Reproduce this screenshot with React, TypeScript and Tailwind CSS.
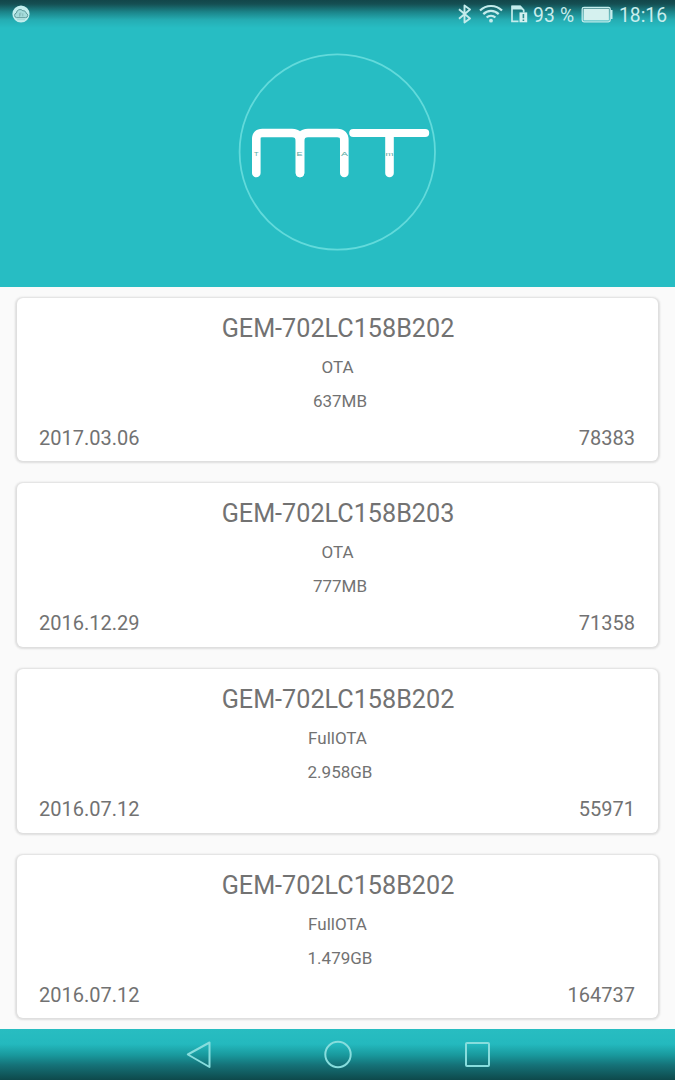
type Firmware = { name: string; kind: string; size: string; date: string; build: string };

const firmwares: Firmware[] = [
  { name: "GEM-702LC158B202", kind: "OTA", size: "637MB", date: "2017.03.06", build: "78383" },
  { name: "GEM-702LC158B203", kind: "OTA", size: "777MB", date: "2016.12.29", build: "71358" },
  { name: "GEM-702LC158B202", kind: "FullOTA", size: "2.958GB", date: "2016.07.12", build: "55971" },
  { name: "GEM-702LC158B202", kind: "FullOTA", size: "1.479GB", date: "2016.07.12", build: "164737" },
];

function CloudIcon() {
  return (
    <svg className="ml-3 h-[18px] w-[18px]" viewBox="0 0 18 18">
      <circle cx="9" cy="9" r="8.6" fill="#c3eeee" />
      <path d="M4.6 12.7h9a2.3 2.3 0 0 0 .5-4.5 2.6 2.6 0 0 0-3.2-2.4A3.7 3.7 0 0 0 4.4 8a2.4 2.4 0 0 0 .2 4.7Z" fill="#a5dcdc" stroke="#5f999b" strokeWidth="1" />
      <path d="M7.6 11.6V8.2h1.8M7.6 9.9h1.6M10.8 8.3v3" fill="none" stroke="#83b5b5" strokeWidth=".9" />
      <path d="M5 14.7h8" stroke="#95cece" strokeWidth=".7" />
    </svg>
  );
}

function StatusIcons() {
  return (
    <svg className="h-7 w-[72px]" viewBox="456 0 72 28" fill="none">
      <path d="M459 9.3l11 9.2-5.5 4V5.5l5.5 4L459 18.7" stroke="#c4ecec" strokeWidth="1.9" strokeLinejoin="round" />
      <g stroke="#c4ecec" strokeWidth="2.2">
        <path d="M480 10.6a15.5 15.5 0 0 1 22 0" />
        <path d="M483.3 14.1a10.9 10.9 0 0 1 15.4 0" />
        <path d="M486.6 17.6a6.2 6.2 0 0 1 8.8 0" />
      </g>
      <circle cx="491" cy="20.7" r="1.9" fill="#c4ecec" />
      <path d="M518.5 21.4H512V6.4h8.2l3.5 3.7v2.5" stroke="#c4ecec" strokeWidth="1.7" />
      <path d="M512 5.8h8.5l3.3 3.7H512Z" fill="#c4ecec" />
      <path d="M519.5 12.4h7.7v9.9h-7.7Z" fill="#d5f1f0" />
      <path d="M523.4 14v4.3M523.4 19.4v1.5" stroke="#2c8e92" strokeWidth="1.6" />
    </svg>
  );
}

function Battery() {
  return (
    <svg className="h-7 w-8" viewBox="581 0 32 28">
      <rect x="582.2" y="7.3" width="28" height="14.5" rx="1.8" fill="none" stroke="#c4ecec" strokeWidth="1.3" />
      <rect x="583.5" y="8.6" width="25.4" height="11.9" fill="#d5f1ef" />
      <path d="M611.6 10v9" stroke="#c4ecec" strokeWidth="1.8" />
    </svg>
  );
}

function Logo() {
  return (
    <svg className="h-[200px] w-[200px]" viewBox="237 52 200 200" fill="none">
      <circle cx="337.3" cy="152" r="97.7" stroke="#62dadb" strokeWidth="1.8" />
      <g stroke="#fff" strokeLinecap="round" strokeLinejoin="round">
        <path d="M256.3 173V139q0-6 6-6H292q8 0 8 9V173" strokeWidth="8.6" />
        <path d="M300 173V142q0-9 8-9h29.300q7 0 7 7V173" strokeWidth="8.6" />
        <path d="M353.2 133h72" strokeWidth="8" />
        <path d="M389.5 135v38" strokeWidth="8.6" />
      </g>
      <g fill="#58aaa4" fontFamily="Liberation Sans, sans-serif" fontSize="5.6">
        <text x="254" y="156" textLength="4.5" lengthAdjust="spacingAndGlyphs">T</text>
        <text x="296.6" y="156" textLength="6" lengthAdjust="spacingAndGlyphs">E</text>
        <text x="341" y="156" textLength="7" lengthAdjust="spacingAndGlyphs">A</text>
        <text x="385.5" y="156" textLength="8" lengthAdjust="spacingAndGlyphs">m</text>
      </g>
    </svg>
  );
}

function Card({ item }: { item: Firmware }) {
  return (
    <article className="flex h-[163.7px] shrink-0 flex-col rounded-[6px] bg-white px-[23px] pt-[11px] text-center text-[#727272] shadow-[0_0.5px_2px_1.5px_#dedede]">
      <h2 className="h-10 pl-px text-[25.2px] leading-10">{item.name}</h2>
      <p className="mt-px h-[34px] text-[17px] leading-[34px]">{item.kind}</p>
      <p className="h-[34px] pl-[5px] text-[17px] leading-[34px]">{item.size}</p>
      <div className="-ml-px mt-px flex h-[38px] justify-between text-[20px] leading-[38px]">
        <span>{item.date}</span>
        <span>{item.build}</span>
      </div>
    </article>
  );
}

export default function App() {
  return (
    <div className="flex h-[1080px] w-[675px] flex-col overflow-hidden bg-[#fafafa] font-['Roboto',sans-serif]">
      <header className="flex h-[287px] shrink-0 flex-col bg-[#27bdc3] bg-[linear-gradient(to_bottom,#12464a_0px,#154f53_4px,#1b8489_12px,#25adb3_20px,#27bdc3_28px)]">
        <div className="flex h-7 items-center text-[19.3px] leading-7 text-[#c9eded]">
          <CloudIcon />
          <div className="ml-auto flex items-center pr-[9px]">
            <StatusIcons />
            <span className="ml-[5px] w-[48px] whitespace-nowrap pt-[3px] tracking-[0.2px]">93 %</span>
            <Battery />
            <span className="ml-[6px] w-[47px] whitespace-nowrap pt-[3px]">18:16</span>
          </div>
        </div>
        <div className="mt-6 flex justify-center pr-[2px]">
          <Logo />
        </div>
      </header>
      <main className="flex h-[742px] shrink-0 flex-col gap-[22px] overflow-hidden px-[17px] pt-[10.7px]">
        {firmwares.map((item, i) => (
          <Card key={i} item={item} />
        ))}
      </main>
      <nav className="flex h-[51px] shrink-0 justify-center bg-[linear-gradient(to_bottom,#28bdc1_0px,#24b9be_15px,#19999d_26px,#157278_36px,#0e494b_51px)]">
        <svg className="h-[51px] w-[310px]" viewBox="183 1029 310 51" fill="none" stroke="#87dddd" strokeWidth="2" strokeLinejoin="round">
          <path d="M187.8 1054.5 209.5 1042.5V1067Z" />
          <circle cx="338" cy="1054.5" r="12.7" />
          <rect x="466" y="1043" width="23" height="23" rx="1" />
        </svg>
      </nav>
    </div>
  );
}
